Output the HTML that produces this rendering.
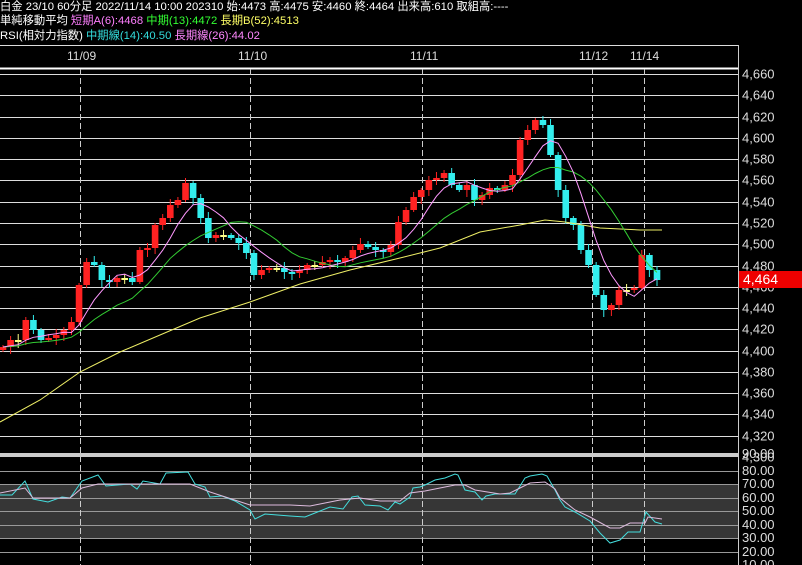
<!DOCTYPE html>
<html><head><meta charset="utf-8"><style>
html,body{margin:0;padding:0;background:#000;width:802px;height:565px;overflow:hidden}
.t{position:absolute;left:0;font:11.3px "Liberation Sans","Noto Sans CJK JP",sans-serif;color:#fff;white-space:nowrap;line-height:14px}
</style></head><body>
<div class="t" style="top:0px">白金 23/10 60分足 2022/11/14 10:00 202310 始:4473 高:4475 安:4460 終:4464 出来高:610 取組高:----</div>
<div class="t" style="top:14px">単純移動平均 <span style="color:#ff7fff">短期A(6):4468</span> <span style="color:#3f3">中期(13):4472</span> <span style="color:#ff6">長期B(52):4513</span></div>
<div class="t" style="top:29px">RSI(相対力指数) <span style="color:#3dd">中期線(14):40.50</span> <span style="color:#f8f">長期線(26):44.02</span></div>
<svg id="s" width="802" height="565" style="position:absolute;left:0;top:0" font-family="Liberation Sans, sans-serif"></svg>
<script>
(function(){
var s=document.getElementById('s'),h='';
function L(x1,y1,x2,y2,c,w,d){h+='<line x1="'+x1+'" y1="'+y1+'" x2="'+x2+'" y2="'+y2+'" stroke="'+c+'" stroke-width="'+(w||1)+'"'+(d?' stroke-dasharray="'+d+'"':'')+'/>';}
function T(x,y,t,c,sz){h+='<text x="'+x+'" y="'+y+'" fill="'+(c||'#ddd')+'" font-size="'+(sz||13)+'">'+t+'</text>';}
L(0,45.5,738,45.5,'#ddd');L(0,68.5,738,68.5,'#fff',2);
[['11/09',67],['11/10',238],['11/11',410],['11/12',579],['11/14',630]].forEach(function(a){T(a[1],60,a[0],'#ddd',12)});
h+='<rect x="0" y="484" width="738" height="54" fill="#363636"/>';
for(var p=4660;p>=4300;p-=20){var y=Math.round(74+(4660-p)*1.064)+.5;if(y<452)L(0,y,738,y,'#ddd');T(742,y+4,(p+'').replace(/(\d)(\d{3})$/,'$1,$2'),'#ddd');}
[471,484,498,511,525,538,552].forEach(function(y){L(0,y+.5,738,y+.5,'#999')});
[['90.00',458],['80.00',475],['70.00',488],['60.00',502],['50.00',515],['40.00',529],['30.00',542],['20.00',556],['10.00',569]].forEach(function(a){T(742,a[1],a[0])});
[80,250,422,592,644].forEach(function(x){L(x+.5,69,x+.5,565,'#ccc',1,'6,3')});
L(738.5,45,738.5,565,'#ccc');
h+='<rect x="0" y="453" width="738" height="4" fill="#ccc"/>';
var c=[347,340,340,320,330,340,338,335,330,322,285,262,265,280,282,278,278,282,250,248,225,218,205,200,183,198,218,238,235,235,238,243,253,275,270,268,268,272,273,270,265,265,262,260,262,258,250,244,247,250,252,245,222,210,197,190,180,178,173,185,190,185,200,195,188,190,185,175,140,130,120,125,155,190,218,225,250,265,295,310,305,290,290,288,255,270,280];
var n=c.length,step=654/(n-1),o=350,pts6=[],pts13=[];
function ma(i,k){var s2=0;for(var j=i-k+1;j<=i;j++)s2+=c[Math.max(0,j)];return s2/k;}
for(var i=0;i<n;i++){var x=3+i*step,cl=c[i],op=o,up=cl<op,tp=Math.min(op,cl),bt=Math.max(op,cl);if(bt-tp<2){bt=tp+2;}
var hi=tp-2-((i*7)%5),lo=bt+2+((i*5)%6);var col=up?'#f22':'#3ee';if(Math.abs(cl-op)<1)col='#ff8';
L(x,hi,x,lo,col);h+='<rect x="'+(x-3.3)+'" y="'+tp+'" width="6.6" height="'+(bt-tp)+'" fill="'+col+'"/>';
o=cl;
pts6.push(x.toFixed(1)+','+ma(i,6).toFixed(1));pts13.push(x.toFixed(1)+','+ma(i,13).toFixed(1));}
function P(p,col){h+='<polyline points="'+p+'" fill="none" stroke="'+col+'" stroke-width="1"/>';}
P('0,422 40,400 80,372 120,352 160,335 200,318 250,302 300,284 350,270 400,258 440,248 480,232 520,225 545,220 565,222 600,228 640,230 662,230','#ee6');
P(pts13.join(' '),'#3c3');P(pts6.join(' '),'#f9f');
P('0,495 12,495 25,481 33,499 48,502 62,497 70,498 82,481 98,475 106,486 130,484 137,489 143,481 160,484 166,473 188,472 195,484 205,487 210,497 222,496 235,501 250,510 255,519 265,514 290,516 305,517 315,513 330,507 343,509 352,497 358,496 365,505 380,506 388,510 395,502 400,504 410,497 413,488 420,487 425,485 435,480 445,478 455,474 458,475 465,490 475,492 482,500 486,496 495,494 515,494 525,478 530,476 542,474 547,476 555,490 560,500 565,507 575,512 590,521 600,533 610,543 620,540 628,532 640,532 646,512 655,522 662,524','#4dd');
P('0,493 25,488 33,498 70,498 82,488 98,484 190,484 210,492 250,505 290,505 310,506 325,503 340,500 360,498 380,501 400,501 410,493 425,491 440,488 455,485 465,485 475,490 500,494 510,493 520,488 530,483 545,482 555,489 560,498 575,510 590,517 610,528 620,528 630,523 645,523 648,517 662,519','#dbd');
h+='<rect x="739" y="271" width="63" height="17" fill="#e00"/>';T(743,284,'4,464','#fff',14);
s.innerHTML=h;
})();
</script>
</body></html>
